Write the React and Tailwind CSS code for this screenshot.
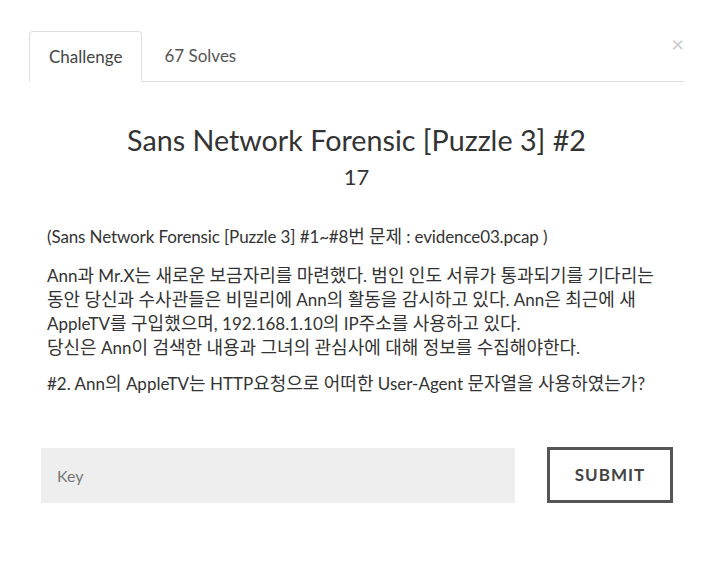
import React, { useState } from "react";

// hangul runs render a touch wider than the latin text around them
function Ko({ text }) {
  const parts = text.split(/([\uAC00-\uD7A3]+)/);
  return parts.map((p, i) =>
    /[\uAC00-\uD7A3]/.test(p) ? (
      <span key={i} className="text-[18px] leading-none">
        {p}
      </span>
    ) : (
      <React.Fragment key={i}>{p}</React.Fragment>
    )
  );
}

const lines = [
  "Ann과 Mr.X는 새로운 보금자리를 마련했다. 범인 인도 서류가 통과되기를 기다리는",
  "동안 당신과 수사관들은 비밀리에 Ann의 활동을 감시하고 있다. Ann은 최근에 새",
  "AppleTV를 구입했으며, 192.168.1.10의 IP주소를 사용하고 있다.",
  "당신은 Ann이 검색한 내용과 그녀의 관심사에 대해 정보를 수집해야한다.",
];

export default function App() {
  const [key, setKey] = useState("");

  return (
    <div
      className="min-h-screen w-full bg-white text-[#333]"
      style={{ fontFamily: "Lato, 'Noto Sans CJK KR', sans-serif" }}
    >
      <div className="relative pt-[31px] pl-[29px] pr-[30px]">
        {/* close */}
        <button className="absolute right-[30px] top-[33px] text-[22px] leading-none text-[#c8c8c8]">
          ×
        </button>

        {/* tabs */}
        <div className="flex border-b border-[#ddd]">
          <div className="-mb-px h-[51px] flex items-center rounded-t border border-[#ddd] border-b-white bg-white px-[19px] text-[17px] text-[#444]">
            Challenge
          </div>
          <div className="h-[50px] flex items-center px-[22px] text-[17px] text-[#555]">
            67 Solves
          </div>
        </div>

        {/* header */}
        <div className="mt-[39px] text-center">
          <h1 className="text-[28.7px] leading-[38px] font-normal">
            Sans Network Forensic [Puzzle 3] #2
          </h1>
          <p className="mt-[3px] text-[22px] leading-[30px]">17</p>
        </div>

        {/* description */}
        <div className="mt-[35px] px-[18px] text-[17px] leading-[24px]">
          <p className="-mt-[2px] tracking-[-0.12px]">
            <Ko text="(Sans Network Forensic [Puzzle 3] #1~#8번 문제 : evidence03.pcap )" />
          </p>
          <p className="mt-[15px]">
            {lines.map((l, i) => (
              <React.Fragment key={i}>
                {i > 0 && <br />}
                <Ko text={l} />
              </React.Fragment>
            ))}
          </p>
          <p className="mt-[12px]">
            <Ko text="#2. Ann의 AppleTV는 HTTP요청으로 어떠한 User-Agent 문자열을 사용하였는가?" />
          </p>
        </div>

        {/* key form */}
        <div className="mt-[51px] flex items-center pl-[12px]">
          <input
            value={key}
            onChange={(e) => setKey(e.target.value)}
            placeholder="Key"
            className="h-[55px] w-[474px] bg-[#eee] px-[16px] text-[16px] text-[#555] placeholder:text-[#777] outline-none"
          />
          <button className="ml-[32px] h-[56px] w-[126px] border-[3px] border-[#555] text-[17px] font-bold tracking-[1px] text-[#444]">
            SUBMIT
          </button>
        </div>
      </div>
    </div>
  );
}
